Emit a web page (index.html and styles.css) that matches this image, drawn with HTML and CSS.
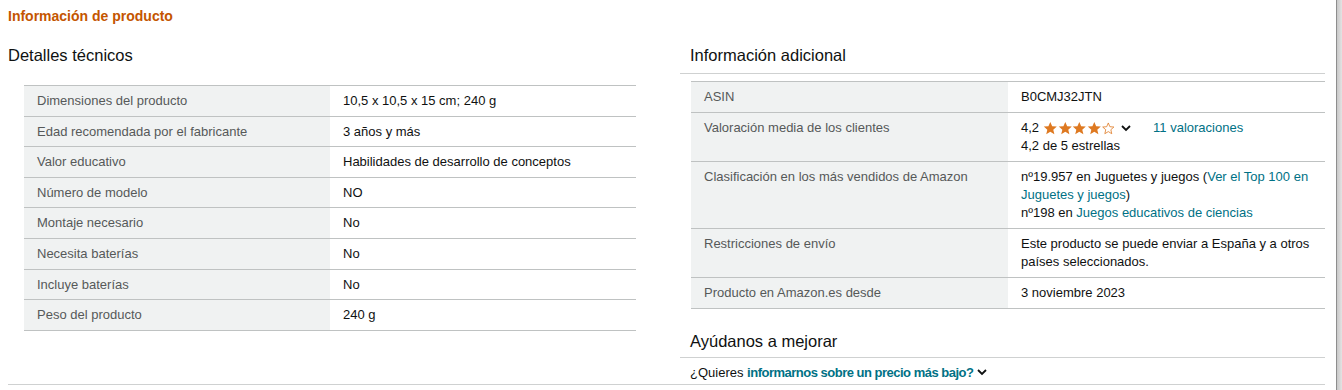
FILE: index.html
```html
<!DOCTYPE html>
<html lang="es">
<head>
<meta charset="utf-8">
<title>Información de producto</title>
<link rel="stylesheet" href="styles.css">
</head>
<body>
<div class="page">
  <main class="content">
    <h2 class="section-title">Información de producto</h2>
    <div class="columns">
      <section class="col">
        <h3 class="col-heading left-heading">Detalles técnicos</h3>
        <table class="details details-left">
          <tr><th>Dimensiones del producto</th><td>10,5 x 10,5 x 15 cm; 240 g</td></tr>
          <tr><th>Edad recomendada por el fabricante</th><td>3 años y más</td></tr>
          <tr><th>Valor educativo</th><td>Habilidades de desarrollo de conceptos</td></tr>
          <tr><th>Número de modelo</th><td>NO</td></tr>
          <tr><th>Montaje necesario</th><td>No</td></tr>
          <tr><th>Necesita baterías</th><td>No</td></tr>
          <tr><th>Incluye baterías</th><td>No</td></tr>
          <tr><th>Peso del producto</th><td>240 g</td></tr>
        </table>
      </section>
      <section class="col">
        <h3 class="col-heading ruled">Información adicional</h3>
        <table class="details details-right">
          <tr><th>ASIN</th><td>B0CMJ32JTN</td></tr>
          <tr><th>Valoración media de los clientes</th>
            <td>
              <div class="rating">
                <span class="rating-num">4,2</span>
                <span class="stars">
                  <svg class="star" viewBox="0 0 24 24"><path d="M12 1.5l3.1 7.1 7.6.6-5.8 5 1.8 7.5L12 17.8l-6.7 3.9 1.8-7.5-5.8-5 7.6-.6z" fill="#de7921"/></svg><svg class="star" viewBox="0 0 24 24"><path d="M12 1.5l3.1 7.1 7.6.6-5.8 5 1.8 7.5L12 17.8l-6.7 3.9 1.8-7.5-5.8-5 7.6-.6z" fill="#de7921"/></svg><svg class="star" viewBox="0 0 24 24"><path d="M12 1.5l3.1 7.1 7.6.6-5.8 5 1.8 7.5L12 17.8l-6.7 3.9 1.8-7.5-5.8-5 7.6-.6z" fill="#de7921"/></svg><svg class="star" viewBox="0 0 24 24"><path d="M12 1.5l3.1 7.1 7.6.6-5.8 5 1.8 7.5L12 17.8l-6.7 3.9 1.8-7.5-5.8-5 7.6-.6z" fill="#de7921"/></svg><svg class="star" viewBox="0 0 24 24"><path d="M12 3.2l2.6 6.2 6.6.5-5 4.4 1.5 6.6L12 17.4l-5.7 3.5 1.5-6.6-5-4.4 6.6-.5z" fill="none" stroke="#de7921" stroke-width="1.3" stroke-linejoin="round"/></svg>
                </span>
                <svg class="chev" viewBox="0 0 10 7"><polyline points="1,1 5,5 9,1" fill="none" stroke="#0f1111" stroke-width="1.8"/></svg>
                <a class="link reviews" href="#">11 valoraciones</a>
              </div>
              <div>4,2 de 5 estrellas</div>
            </td></tr>
          <tr><th>Clasificación en los más vendidos de Amazon</th>
            <td>nº19.957 en Juguetes y juegos (<a class="link" href="#">Ver el Top 100 en Juguetes y juegos</a>)<br>nº198 en <a class="link" href="#">Juegos educativos de ciencias</a></td></tr>
          <tr><th>Restricciones de envío</th><td>Este producto se puede enviar a España y a otros países seleccionados.</td></tr>
          <tr><th>Producto en Amazon.es desde</th><td>3 noviembre 2023</td></tr>
        </table>
        <h3 class="col-heading ruled help">Ayúdanos a mejorar</h3>
        <p class="feedback">¿Quieres <a class="link strong" href="#">informarnos sobre un precio más bajo?</a> <svg class="chev chev-fb" viewBox="0 0 10 7"><polyline points="1,1 5,5 9,1" fill="none" stroke="#0f1111" stroke-width="1.8"/></svg></p>
      </section>
    </div>
  </main>
  <div class="scrollbar"></div>
</div>
</body>
</html>
```
FILE: styles.css
```css
html, body {
  margin: 0;
  padding: 0;
  background: #ffffff;
}

body {
  font-family: "Liberation Sans", Arial, sans-serif;
  color: #0f1111;
  font-size: 13px;
}

.page {
  display: flex;
  height: 390px;
  overflow: hidden;
}

.content {
  flex: 1;
  padding: 0 11px 0 8px;
}

.scrollbar {
  width: 6px;
  flex: none;
  background: linear-gradient(to right, #8e8e8e 0, #8e8e8e 1px, #c9c9c9 1px, #e3e3e3 100%);
}

.section-title {
  margin: 0;
  padding-top: 6px;
  font-size: 14px;
  line-height: 20px;
  font-weight: 700;
  color: #c45500;
}

.columns {
  display: grid;
  grid-template-columns: 628px 1fr;
  column-gap: 44px;
  margin-top: 17px;
  border-bottom: 1px solid #cfd1d1;
}

.col-heading {
  margin: 0;
  padding-left: 10px;
  font-size: 16.5px;
  line-height: 24px;
  font-weight: 400;
  color: #0f1111;
}

.left-heading {
  padding-left: 0;
}

.ruled {
  padding-bottom: 6px;
  border-bottom: 1px solid #cfd1d1;
}

.details {
  border-collapse: collapse;
  table-layout: fixed;
}

.details th,
.details td {
  box-sizing: border-box;
  padding: 6px 13px;
  font-size: 13px;
  line-height: 18px;
  text-align: left;
  vertical-align: top;
  border-top: 1px solid #bfc2c2;
  border-bottom: 1px solid #bfc2c2;
}

.details th {
  width: 50%;
  font-weight: 400;
  background: #f0f2f2;
  color: #565959;
}

.details td {
  color: #0f1111;
}

.details-left {
  margin: 18px 0 0 16px;
  width: 612px;
}

.details-left th,
.details-left td {
  line-height: 17.6px;
}

.details-right {
  margin: 7px 0 0 11px;
  width: calc(100% - 11px);
}

.link {
  color: #007185;
  text-decoration: none;
}

.strong {
  font-weight: 700;
  letter-spacing: -0.5px;
}

.rating {
  display: flex;
  align-items: center;
  height: 18px;
}

.rating-num {
  margin-right: 4px;
}

.stars {
  display: flex;
  align-items: center;
}

.star {
  width: 14.6px;
  height: 14.6px;
  display: block;
}

.chev {
  width: 10px;
  height: 7px;
  display: block;
  margin-left: 5px;
}

.reviews {
  margin-left: 22px;
}

.help {
  margin-top: 20px;
  padding-bottom: 4px;
}

.feedback {
  margin: 0;
  padding: 6px 0 2px 10px;
  font-size: 13px;
  line-height: 18px;
}

.chev-fb {
  display: inline-block;
  margin-left: 0;
  vertical-align: 1px;
}
```
